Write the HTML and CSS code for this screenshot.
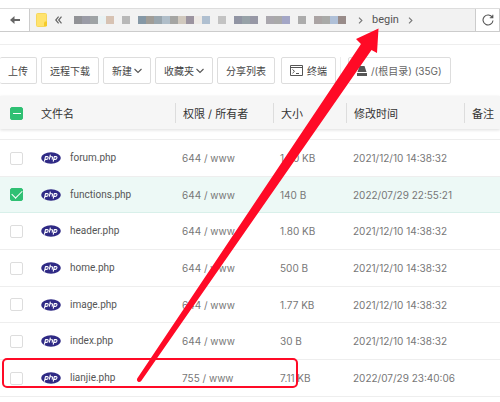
FILE: index.html
```html
<!DOCTYPE html>
<html lang="zh-CN">
<head>
  <meta charset="UTF-8">
  <meta name="viewport" content="width=device-width, initial-scale=1.0">
  <title>文件管理</title>
  <link rel="stylesheet" href="styles.css">
</head>
<body>
  <!-- Shared icons -->
  <svg class="icon-defs" aria-hidden="true">
    <symbol id="icon-php" viewBox="0 0 20 12">
      <ellipse cx="10" cy="6" rx="9.8" ry="5.8" fill="#2f2a85"/>
      <g fill="none" stroke="#fff" stroke-width="1.1" stroke-linejoin="round">
        <path d="M3.4 9.6 4.5 4.6H6.2Q7.4 4.6 7.1 6 6.8 7.4 5.4 7.4H4"/>
        <path d="M9.4 2.6 8.3 7.6M8.9 4.7H10.8Q11.7 4.7 11.5 5.6L11.1 7.6"/>
        <path d="M12.2 9.6 13.3 4.6H15Q16.2 4.6 15.9 6 15.6 7.4 14.2 7.4H12.8"/>
      </g>
    </symbol>
    <symbol id="icon-down" viewBox="0 0 8 6">
      <path d="M.5 1 4 4.500 7.500 1" fill="none" stroke="#555" stroke-width="1.1"/>
    </symbol>
    <symbol id="icon-right" viewBox="0 0 5 7">
      <path d="M1 .7 3.9 3.5 1 6.3" fill="none" stroke="#777" stroke-width="1.1"/>
    </symbol>
  </svg>

  <div class="file-manager">
    <!-- Path bar -->
    <div class="path-bar">
      <button type="button" class="path-btn back" aria-label="返回">
        <svg width="10" height="8" viewBox="0 0 10 8"><path d="M0 4 4.5 0V2.9H10V5.1H4.5V8Z" fill="#666"/></svg>
      </button>
      <nav class="path">
        <svg class="folder" width="12" height="14" viewBox="0 0 12 14">
          <rect x=".5" y=".5" width="10" height="13" rx="1" fill="#ffe36e" stroke="#f6d75c"/>
          <path d="M8 9.5 9 8.5H11V13H8Z" fill="#f5cb2a"/>
        </svg>
        <svg class="more" width="7" height="8" viewBox="0 0 7 8">
          <path d="M3.6 .7 .8 4 3.6 7.3M6.5 .7 3.7 4 6.5 7.3" fill="none" stroke="#666" stroke-width="1.2"/>
        </svg>
        <svg class="masked" width="272" height="8" viewBox="0 0 272 8" shape-rendering="crispEdges">
          <path d="M0 0H8V8H0Z" fill="#919296"/><path d="M8 0H16V8H8Z" fill="#9a9ba6"/><path d="M16 0H24V8H16Z" fill="#9fa3a5"/><path d="M24 0H32V8H24Z" fill="#e9f1f2"/><path d="M32 0H40V8H32Z" fill="#d7c2b3"/>
          <path d="M48 0H56V8H48Z" fill="#b8b8b8"/>
          <path d="M64 0H72V8H64Z" fill="#8598a6"/><path d="M72 0H80V8H72Z" fill="#a09d97"/><path d="M80 0H88V8H80Z" fill="#99a6ae"/><path d="M88 0H96V8H88Z" fill="#b0bec9"/><path d="M96 0H104V8H96Z" fill="#a5a5a3"/><path d="M104 0H112V8H104Z" fill="#d1c9be"/><path d="M112 0H120V8H112Z" fill="#9c94a0"/><path d="M120 0H128V8H120Z" fill="#eeeae6"/><path d="M128 0H136V8H128Z" fill="#afbfd0"/>
          <path d="M144 0H152V8H144Z" fill="#c3c3c3"/>
          <path d="M160 0H168V8H160Z" fill="#9195a4"/><path d="M168 0H176V8H168Z" fill="#97a2a8"/><path d="M176 0H184V8H176Z" fill="#9798a6"/>
          <path d="M192 0H200V8H192Z" fill="#aaa7ae"/><path d="M200 0H208V8H200Z" fill="#a9a9a9"/><path d="M208 0H216V8H208Z" fill="#a3a6c6"/>
          <path d="M224 0H232V8H224Z" fill="#acacac"/>
          <path d="M240 0H248V8H240Z" fill="#aba4a4"/><path d="M248 0H256V8H248Z" fill="#a9aaa8"/><path d="M256 0H264V8H256Z" fill="#afc0d8"/><path d="M264 0H272V8H264Z" fill="#988b89"/>
        </svg>
        <svg class="sep" width="5" height="7"><use href="#icon-right"/></svg>
        <a href="#">begin</a>
        <svg class="sep" width="5" height="7"><use href="#icon-right"/></svg>
      </nav>
      <button type="button" class="path-btn reload" aria-label="刷新">
        <svg width="12" height="12" viewBox="0 0 12 12"><path d="M10.4 3.5A5 5 0 1 0 11 6.5M10.8 .8V3.8H7.8" fill="none" stroke="#555" stroke-width="1.1"/></svg>
      </button>
    </div>

    <!-- Toolbar -->
    <div class="toolbar">
      <button type="button" class="first">上传</button>
      <button type="button">远程下载</button>
      <button type="button">新建<svg width="8" height="6"><use href="#icon-down"/></svg></button>
      <button type="button">收藏夹<svg width="8" height="6"><use href="#icon-down"/></svg></button>
      <button type="button">分享列表</button>
      <button type="button" class="terminal">
        <svg width="13" height="11" viewBox="0 0 13 11"><path d="M.5 .5H12.5V10.5H.5ZM.5 2.5H12.5M2.5 4.5 4.5 6.3 2.5 8.2M6 8.5H9" fill="none" stroke="#555"/></svg>
        终端
      </button>
      <span class="divider"></span>
      <button type="button" class="disk">
        <svg width="10" height="10" viewBox="0 0 10 10"><path d="M2.5 0H7.5L9.5 6H.5ZM0 7H10V10H0Z" fill="#555"/></svg>
        /(根目录) (35G)
      </button>
    </div>

    <!-- File list -->
    <table class="file-list">
      <colgroup>
        <col class="col-check">
        <col class="col-name">
        <col class="col-owner">
        <col class="col-size">
        <col class="col-time">
        <col class="col-note">
      </colgroup>
      <thead>
        <tr>
          <th><input type="checkbox" class="partial" aria-label="全选"></th>
          <th>文件名</th>
          <th>权限 / 所有者</th>
          <th>大小</th>
          <th>修改时间</th>
          <th>备注</th>
        </tr>
      </thead>
      <tbody>
        <tr>
          <td><input type="checkbox" id="file-1"></td>
          <td><label for="file-1"><svg width="20" height="12"><use href="#icon-php"/></svg>forum.php</label></td>
          <td>644 / www</td>
          <td>1.50 KB</td>
          <td>2021/12/10 14:38:32</td>
          <td></td>
        </tr>
        <tr class="selected">
          <td><input type="checkbox" id="file-2" checked></td>
          <td><label for="file-2"><svg width="20" height="12"><use href="#icon-php"/></svg>functions.php</label></td>
          <td>644 / www</td>
          <td>140 B</td>
          <td>2022/07/29 22:55:21</td>
          <td></td>
        </tr>
        <tr>
          <td><input type="checkbox" id="file-3"></td>
          <td><label for="file-3"><svg width="20" height="12"><use href="#icon-php"/></svg>header.php</label></td>
          <td>644 / www</td>
          <td>1.80 KB</td>
          <td>2021/12/10 14:38:32</td>
          <td></td>
        </tr>
        <tr>
          <td><input type="checkbox" id="file-4"></td>
          <td><label for="file-4"><svg width="20" height="12"><use href="#icon-php"/></svg>home.php</label></td>
          <td>644 / www</td>
          <td>500 B</td>
          <td>2021/12/10 14:38:32</td>
          <td></td>
        </tr>
        <tr>
          <td><input type="checkbox" id="file-5"></td>
          <td><label for="file-5"><svg width="20" height="12"><use href="#icon-php"/></svg>image.php</label></td>
          <td>644 / www</td>
          <td>1.77 KB</td>
          <td>2021/12/10 14:38:32</td>
          <td></td>
        </tr>
        <tr>
          <td><input type="checkbox" id="file-6"></td>
          <td><label for="file-6"><svg width="20" height="12"><use href="#icon-php"/></svg>index.php</label></td>
          <td>644 / www</td>
          <td>30 B</td>
          <td>2021/12/10 14:38:32</td>
          <td></td>
        </tr>
        <tr>
          <td><input type="checkbox" id="file-7"></td>
          <td><label for="file-7"><svg width="20" height="12"><use href="#icon-php"/></svg>lianjie.php</label></td>
          <td>755 / www</td>
          <td>7.11 KB</td>
          <td>2022/07/29 23:40:06</td>
          <td></td>
        </tr>
      </tbody>
    </table>

    <!-- Red marks over the list -->
    <svg class="marks" width="500" height="402" viewBox="0 0 500 402" aria-hidden="true">
      <rect x="3" y="359" width="294" height="28" rx="4" fill="none" stroke="#ff0a26" stroke-width="2"/>
      <path d="M137.2 378.5 361 44 356 39 378.500 28.500 377 53 371.500 50 141.200 381Q139.500 382.800 137.800 381.500 136.300 380.300 137.200 378.500Z" fill="#ff0a26"/>
    </svg>
  </div>
</body>
</html>
```
FILE: styles.css
```css
/* General */
* {
  box-sizing: border-box;
}
body {
  margin: 0;
  background: #fff;
  color: #555;
  font-family: Inter, "Noto Sans CJK SC", sans-serif;
  font-size: 10px;
  line-height: 16px;
}
button {
  padding: 0;
  border: 1px solid #ddd;
  background: #fff;
  color: #444;
  font: inherit;
  cursor: pointer;
}
.icon-defs {
  position: absolute;
  width: 0;
  height: 0;
}
.file-manager {
  position: relative;
  padding-top: 8px;
  overflow: hidden;
}

/* Path bar */
.path-bar {
  display: flex;
  height: 24px;
  border-top: 1px solid #ddd;
  border-bottom: 1px solid #ccc;
}
.path-btn {
  display: flex;
  align-items: center;
  justify-content: center;
  border-width: 0 1px;
  border-color: #ccc;
}
.back {
  width: 30px;
  border-left: 0;
}
.reload {
  width: 25px;
}
.path {
  flex: 1;
  display: flex;
  align-items: center;
  padding-left: 6px;
  background: #f2f2f2;
}
.path a {
  margin: 0 9px;
  color: #555;
  font-family: Roboto, sans-serif;
  font-size: 11px;
  text-decoration: none;
}
.more {
  margin: 0 12px 0 7px;
}
.masked {
  margin-right: 12px;
}

/* Toolbar */
.toolbar {
  display: flex;
  align-items: center;
  gap: 4px;
  margin-top: 12px;
  padding: 12px 0;
  border-top: 1px solid #eee;
  white-space: nowrap;
}
.toolbar button {
  display: flex;
  align-items: center;
  gap: 2px;
  height: 27px;
  padding: 0 8px;
  border-radius: 2px;
}
.toolbar .first {
  border-left: 0;
}
.toolbar .terminal {
  gap: 4px;
  margin-left: 2px;
}
.toolbar .disk {
  gap: 4px;
  margin-left: 3px;
  color: #666;
}
.divider {
  width: 1px;
  height: 27px;
  background: #eee;
}

/* File list */
.file-list {
  width: 100%;
  border-collapse: separate;
  border-spacing: 0;
  table-layout: fixed;
}
.col-check {
  width: 33px;
}
.col-name {
  width: 142px;
}
.col-owner {
  width: 98px;
}
.col-size {
  width: 73px;
}
.col-time {
  width: 118px;
}
.file-list th,
.file-list td {
  padding: 0 0 0 7px;
  text-align: left;
  white-space: nowrap;
}
.file-list th {
  height: 33px;
  padding: 2px 0 0 8px;
  background: linear-gradient(#ddd, #ddd) 0 50% / 1px 20px no-repeat #f6f6f6;
  color: #333;
  font-size: 11px;
  font-weight: 400;
}
.file-list th:nth-child(-n+2) {
  background: #f6f6f6;
}
.file-list thead tr {
  box-shadow: 0 1px 3px #ddd;
}
.file-list tbody::before {
  content: "";
  display: block;
  height: 10px;
}
.file-list td {
  height: 37px;
  border-top: 1px solid #eee;
  color: #777;
}
.file-list tr:nth-child(3n+2) td {
  height: 36px;
}
.file-list tr:last-child td {
  height: 38px;
  border-bottom: 1px solid #eee;
}
.file-list .selected td {
  background: #edf9f6;
}
.file-list .selected + tr td {
  border-top-color: #d8f0ea;
}
.file-list th:first-child,
.file-list td:first-child {
  padding-left: 10px;
}
.file-list label {
  display: flex;
  align-items: center;
  gap: 9px;
  margin-left: 1px;
  color: #555;
  font-family: Roboto, sans-serif;
}

/* Checkboxes */
input[type="checkbox"] {
  display: block;
  width: 13px;
  height: 13px;
  margin: 0;
  border: 1px solid #ddd;
  border-radius: 2px;
  background: #fff;
  appearance: none;
}
input[type="checkbox"]:checked,
input.partial {
  display: grid;
  place-items: center;
  border-color: #2fc073;
  background: #2fc073;
}
input.partial::before {
  content: "";
  width: 8px;
  height: 1px;
  background: #fff;
}
input[type="checkbox"]:checked::before {
  content: "";
  width: 9px;
  height: 5px;
  margin-bottom: 3px;
  border: solid #fff;
  border-width: 0 0 1px 1px;
  transform: rotate(-45deg);
}

.marks {
  position: absolute;
  top: 0;
  left: 0;
}
```
